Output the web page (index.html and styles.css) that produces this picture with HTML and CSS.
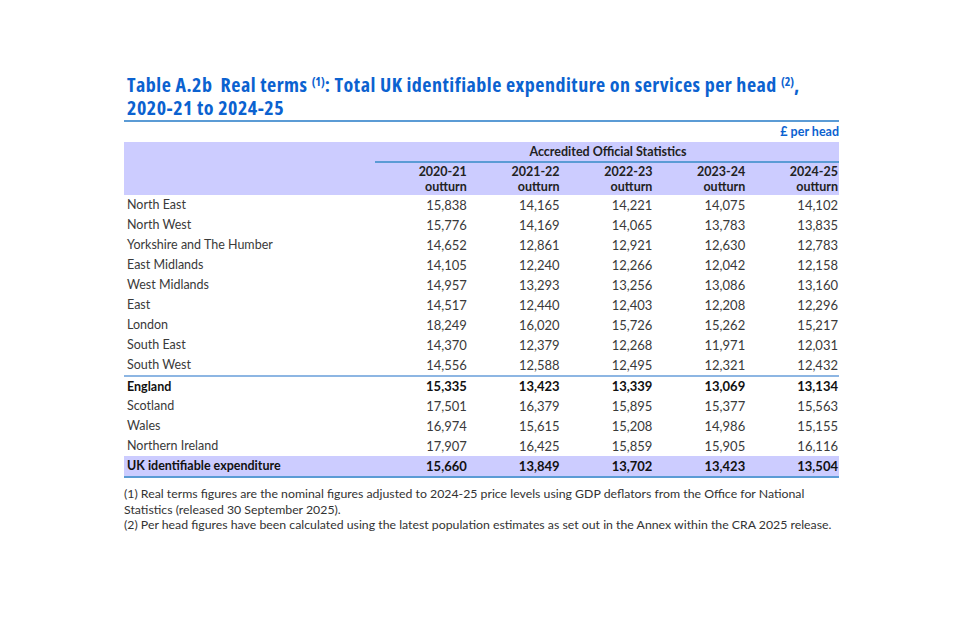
FILE: index.html
```html
<!DOCTYPE html>
<html lang="en">
<head>
<meta charset="utf-8">
<title>Table A.2b</title>
<link rel="stylesheet" href="styles.css">
</head>
<body>
<div class="page">
  <h1 class="title">Table A.2b&nbsp; Real terms <sup>(1)</sup>: Total UK identifiable expenditure on services per head <sup>(2)</sup>,<br>2020-21 to 2024-25</h1>
  <div class="unit">£ per head</div>
  <table class="data">
    <colgroup><col class="c-name"><col><col><col><col><col></colgroup>
    <thead>
      <tr class="h-top"><th></th><th colspan="5" class="accr">Accredited Official Statistics</th></tr>
      <tr class="h-year"><th></th><th>2020-21<br>outturn</th><th>2021-22<br>outturn</th><th>2022-23<br>outturn</th><th>2023-24<br>outturn</th><th>2024-25<br>outturn</th></tr>
    </thead>
    <tbody>
      <tr><td>North East</td><td>15,838</td><td>14,165</td><td>14,221</td><td>14,075</td><td>14,102</td></tr>
      <tr><td>North West</td><td>15,776</td><td>14,169</td><td>14,065</td><td>13,783</td><td>13,835</td></tr>
      <tr><td>Yorkshire and The Humber</td><td>14,652</td><td>12,861</td><td>12,921</td><td>12,630</td><td>12,783</td></tr>
      <tr><td>East Midlands</td><td>14,105</td><td>12,240</td><td>12,266</td><td>12,042</td><td>12,158</td></tr>
      <tr><td>West Midlands</td><td>14,957</td><td>13,293</td><td>13,256</td><td>13,086</td><td>13,160</td></tr>
      <tr><td>East</td><td>14,517</td><td>12,440</td><td>12,403</td><td>12,208</td><td>12,296</td></tr>
      <tr><td>London</td><td>18,249</td><td>16,020</td><td>15,726</td><td>15,262</td><td>15,217</td></tr>
      <tr><td>South East</td><td>14,370</td><td>12,379</td><td>12,268</td><td>11,971</td><td>12,031</td></tr>
      <tr><td>South West</td><td>14,556</td><td>12,588</td><td>12,495</td><td>12,321</td><td>12,432</td></tr>
      <tr class="total eng"><td>England</td><td>15,335</td><td>13,423</td><td>13,339</td><td>13,069</td><td>13,134</td></tr>
      <tr><td>Scotland</td><td>17,501</td><td>16,379</td><td>15,895</td><td>15,377</td><td>15,563</td></tr>
      <tr><td>Wales</td><td>16,974</td><td>15,615</td><td>15,208</td><td>14,986</td><td>15,155</td></tr>
      <tr><td>Northern Ireland</td><td>17,907</td><td>16,425</td><td>15,859</td><td>15,905</td><td>16,116</td></tr>
      <tr class="total uk"><td>UK identifiable expenditure</td><td>15,660</td><td>13,849</td><td>13,702</td><td>13,423</td><td>13,504</td></tr>
    </tbody>
  </table>
  <div class="notes">
    <p>(1) Real terms figures are the nominal figures adjusted to 2024-25 price levels using GDP deflators from the Office for National Statistics (released 30 September 2025).</p>
    <p>(2) Per head figures have been calculated using the latest population estimates as set out in the Annex within the CRA 2025 release.</p>
  </div>
</div>
</body>
</html>
```

FILE: styles.css
```css
html, body {
  margin: 0;
  padding: 0;
  background: #ffffff;
}
body {
  font-family: Lato, "Open Sans", sans-serif;
  color: #333333;
}
.page {
  width: 715px;
  margin-left: 124px;
  padding-top: 73px;
}
.title {
  margin: 0;
  padding: 0 0 1px 3px;
  font-family: "Open Sans", "DejaVu Sans Condensed", sans-serif;
  font-stretch: 75%;
  font-weight: bold;
  font-size: 20px;
  letter-spacing: 0.5px;
  line-height: 23px;
  color: #0b62d0;
  border-bottom: 2px solid #5b9bd5;
  white-space: nowrap;
}
.title sup {
  font-size: 12px;
  line-height: 0;
  letter-spacing: 0;
  vertical-align: 6px;
}
.unit {
  height: 20px;
  line-height: 20px;
  text-align: right;
  font-weight: bold;
  font-size: 12.5px;
  color: #0b62d0;
}
.data {
  width: 715px;
  border-collapse: collapse;
  table-layout: fixed;
  font-size: 12.5px;
}
.c-name { width: 251px; }
.data th, .data td {
  padding: 0 1px 0 3px;
  white-space: nowrap;
}
.data thead tr { background: #ccccff; }
.data th {
  font-weight: bold;
  color: #222222;
  font-size: 12.5px;
}
.h-top th {
  height: 19px;
  line-height: 19px;
  padding-top: 0;
}
.accr {
  text-align: center;
  border-bottom: 2px solid #5b9bd5;
}
.h-year th {
  text-align: right;
  line-height: 15px;
  padding-top: 1px;
  padding-bottom: 1px;
}
.data td {
  height: 20px;
  line-height: 20px;
  color: #3a3a3a;
}
.data td + td { text-align: right; font-size: 13px; }
.total td {
  font-weight: bold;
  color: #111111;
}
.eng td {
  border-top: 2px solid #8db6e3;
  height: 19px;
  line-height: 19px;
}
.uk td {
  background: #ccccff;
  border-bottom: 2px solid #5b9bd5;
}
.notes {
  margin-top: 8px;
  font-size: 12.3px;
  line-height: 15.5px;
  color: #333333;
}
.notes p { margin: 0; }
```
